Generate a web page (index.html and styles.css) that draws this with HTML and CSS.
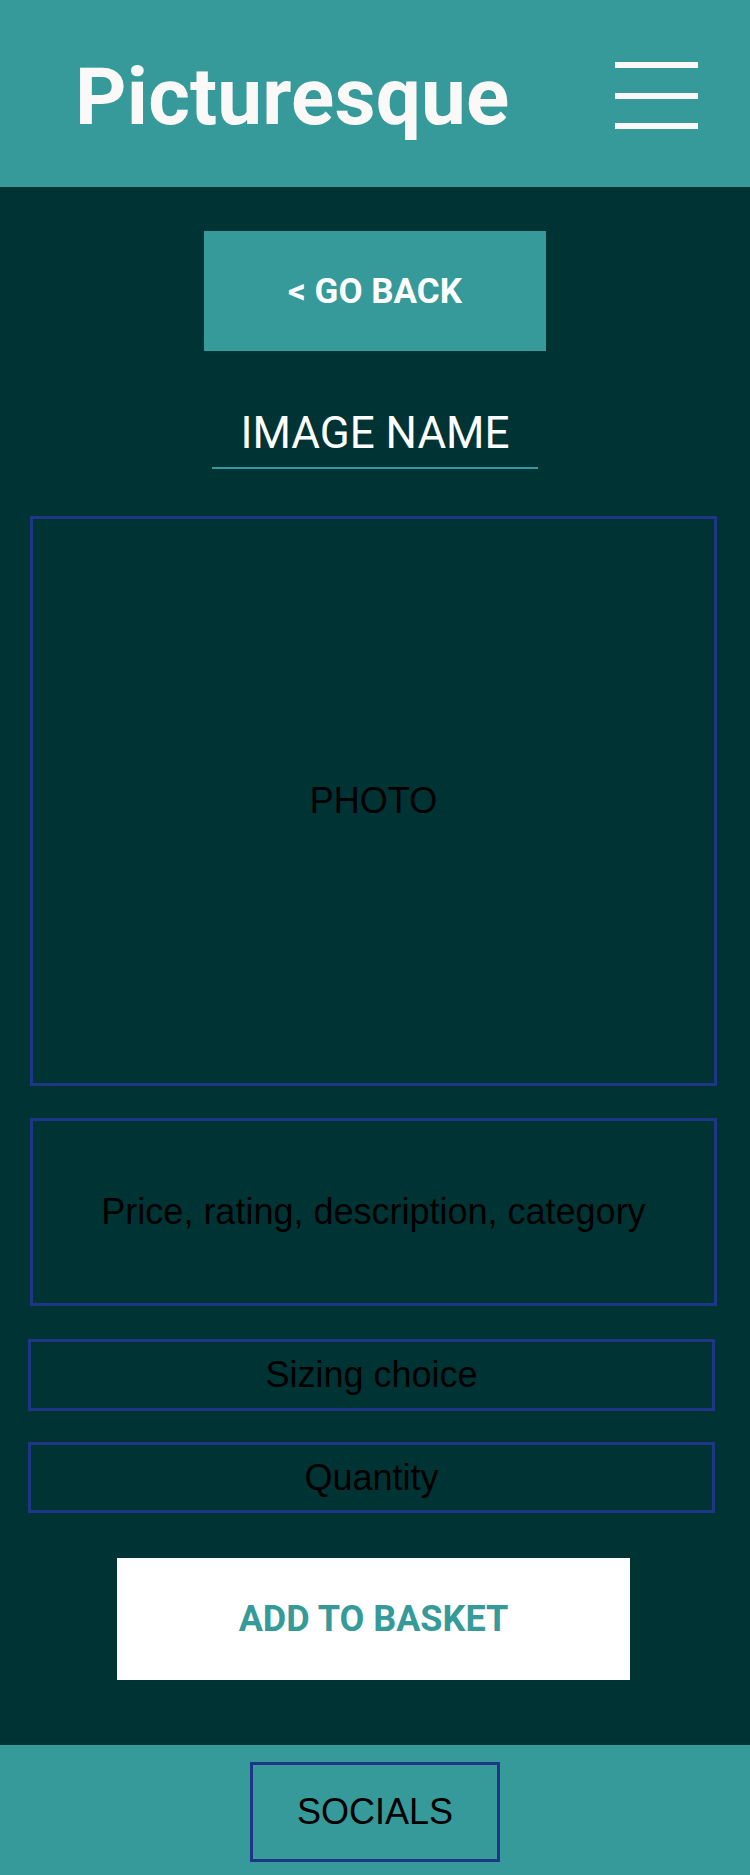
FILE: index.html
```html
<!DOCTYPE html>
<html lang="en">
<head>
<meta charset="utf-8">
<title>Picturesque</title>
<link rel="stylesheet" href="styles.css">
</head>
<body>
<header class="site-header">
  <h1 class="brand">Picturesque</h1>
  <button class="menu-toggle" aria-label="Menu">
    <span class="bar"></span><span class="bar"></span><span class="bar"></span>
  </button>
</header>
<main class="product">
  <a class="back-btn" href="#">&lt; GO BACK</a>
  <div class="title-wrap"><h2 class="image-name">IMAGE NAME</h2></div>
  <div class="box photo">PHOTO</div>
  <div class="box info">Price, rating, description, category</div>
  <div class="box option">Sizing choice</div>
  <div class="box option qty">Quantity</div>
  <button class="basket-btn">ADD TO BASKET</button>
</main>
<footer class="site-footer">
  <div class="socials">SOCIALS</div>
</footer>
</body>
</html>
```
FILE: styles.css
```css
* { box-sizing: border-box; }
html, body { margin: 0; padding: 0; }
body {
  width: 750px;
  background: #003334;
  font-family: "Liberation Sans", Arial, sans-serif;
}
.site-header {
  height: 187px;
  background: #359a99;
  display: flex;
  justify-content: space-between;
  align-items: flex-start;
  padding: 0 52px 0 75px;
}
.brand {
  margin: 57px 0 0;
  font-family: Roboto, sans-serif;
  font-weight: 700;
  font-size: 80px;
  line-height: 80px;
  color: #fbf9f7;
  letter-spacing: 0.2px;
}
.menu-toggle {
  margin-top: 62px;
  width: 83px;
  height: 67px;
  padding: 0;
  border: 0;
  background: transparent;
  display: flex;
  flex-direction: column;
  justify-content: space-between;
}
.bar {
  display: block;
  height: 6px;
  width: 100%;
  background: #fbf9f7;
}
.product {
  display: flex;
  flex-direction: column;
  padding: 44px 0 65px;
}
.back-btn {
  align-self: center;
  width: 342px;
  height: 120px;
  background: #359a99;
  color: #ffffff;
  font-family: Roboto, sans-serif;
  font-weight: 700;
  font-size: 35px;
  text-decoration: none;
  display: flex;
  align-items: center;
  justify-content: center;
}
.title-wrap {
  margin-top: 56px;
  text-align: center;
}
.image-name {
  display: inline-block;
  margin: 0;
  padding: 0 28px 8px;
  border-bottom: 2px solid #359a99;
  font-family: Roboto, sans-serif;
  font-weight: 400;
  font-size: 44px;
  line-height: 52px;
  color: #ffffff;
}
.box {
  border: 3px solid #1f3585;
  color: #000000;
  font-size: 36px;
  display: flex;
  align-items: center;
  justify-content: center;
  width: 687px;
  margin-left: 30px;
}
.photo { margin-top: 47px; height: 570px; }
.info { margin-top: 32px; height: 188px; }
.option { margin-top: 33px; height: 72px; margin-left: 28px; }
.qty { margin-top: 31px; height: 71px; }
.basket-btn {
  align-self: flex-start;
  margin: 45px 0 0 117px;
  width: 513px;
  height: 122px;
  border: 0;
  background: #ffffff;
  color: #359a99;
  font-family: Roboto, sans-serif;
  font-weight: 700;
  font-size: 36px;
  padding: 0;
}
.site-footer {
  height: 130px;
  background: #359a99;
  padding-top: 17px;
  display: flex;
  justify-content: center;
  align-items: flex-start;
}
.socials {
  width: 250px;
  height: 100px;
  border: 3px solid #1f3585;
  color: #000000;
  font-size: 36px;
  display: flex;
  align-items: center;
  justify-content: center;
}
```
